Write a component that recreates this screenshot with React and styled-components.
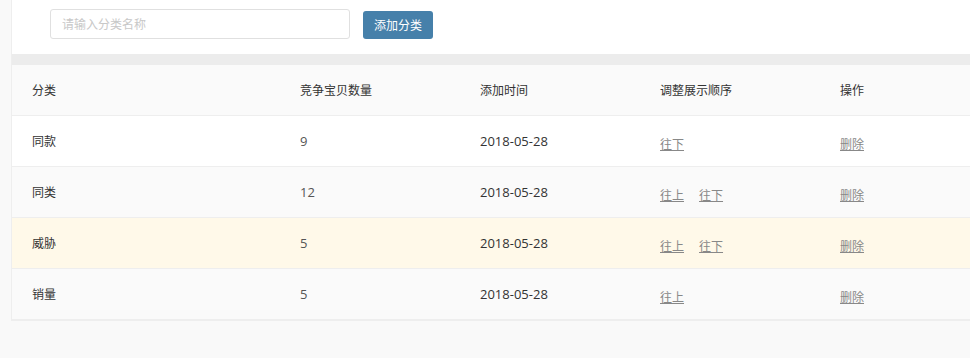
import styled, { createGlobalStyle } from "styled-components";

const GlobalStyle = createGlobalStyle`
  html, body {
    margin: 0;
    padding: 0;
    background: #f9f9f9;
    font-family: "Open Sans", "Noto Sans CJK SC", sans-serif;
    font-size: 12px;
    color: #333;
  }
`;

const rows = [
  { name: "同款", count: 9, date: "2018-05-28", up: false, down: true, bg: "#ffffff" },
  { name: "同类", count: 12, date: "2018-05-28", up: true, down: true, bg: "#fafafa" },
  { name: "威胁", count: 5, date: "2018-05-28", up: true, down: true, bg: "#fff9e9" },
  { name: "销量", count: 5, date: "2018-05-28", up: true, down: false, bg: "#fafafa" },
];

export default function App() {
  return (
    <Page>
      <GlobalStyle />
      <Panel>
        <Toolbar>
          <Input placeholder="请输入分类名称" />
          <AddButton>添加分类</AddButton>
        </Toolbar>
        <Divider />
        <Table>
          <Row $bg="#fafafa">
            <Cell>分类</Cell>
            <Cell>竞争宝贝数量</Cell>
            <Cell>添加时间</Cell>
            <Cell>调整展示顺序</Cell>
            <Cell>操作</Cell>
          </Row>
          {rows.map((r) => (
            <Row key={r.name} $bg={r.bg}>
              <Cell>{r.name}</Cell>
              <Cell $num $muted>{r.count}</Cell>
              <Cell $num>{r.date}</Cell>
              <Cell>
                {r.up && <LinkBtn>往上</LinkBtn>}
                {r.down && <LinkBtn>往下</LinkBtn>}
              </Cell>
              <Cell>
                <LinkBtn>删除</LinkBtn>
              </Cell>
            </Row>
          ))}
        </Table>
      </Panel>
    </Page>
  );
}

const Page = styled.div`
  padding-left: 11px;
  min-height: 358px;
  box-sizing: border-box;
`;

const Panel = styled.div`
  background: #fff;
  border-left: 1px solid #eee;
  border-bottom: 1px solid #eee;
`;

const Toolbar = styled.div`
  height: 54px;
  display: flex;
  align-items: flex-start;
  padding-left: 38px;
  box-sizing: border-box;
`;

const Input = styled.input`
  margin-top: 9px;
  width: 300px;
  height: 30px;
  box-sizing: border-box;
  border: 1px solid #e0e0e0;
  border-radius: 3px;
  padding: 0 11px;
  font-family: inherit;
  font-size: 12px;
  color: #333;
  outline: none;

  &::placeholder {
    color: #c8c8c8;
  }
`;

const AddButton = styled.button`
  margin-top: 11px;
  margin-left: 13px;
  width: 70px;
  height: 28px;
  border: none;
  border-radius: 3px;
  background: #4680aa;
  color: #fff;
  font-family: inherit;
  font-size: 12px;
  padding: 0;
  cursor: pointer;
`;

const Divider = styled.div`
  height: 11px;
  background: #ececec;
`;

const Table = styled.div`
  display: flex;
  flex-direction: column;
`;

const Row = styled.div`
  display: grid;
  grid-template-columns: 268px 180px 180px 180px 1fr;
  height: 51px;
  box-sizing: border-box;
  border-bottom: 1px solid #eee;
  background: ${(p) => p.$bg};
`;

const Cell = styled.div`
  display: flex;
  align-items: center;
  padding-left: 20px;
  font-size: ${(p) => (p.$num ? "13px" : "12px")};
  color: ${(p) => (p.$muted ? "#555" : "#333")};
`;

const LinkBtn = styled.a`
  color: #888;
  text-decoration: underline;
  margin-top: 6px;
  margin-right: 15px;
  cursor: pointer;
`;
